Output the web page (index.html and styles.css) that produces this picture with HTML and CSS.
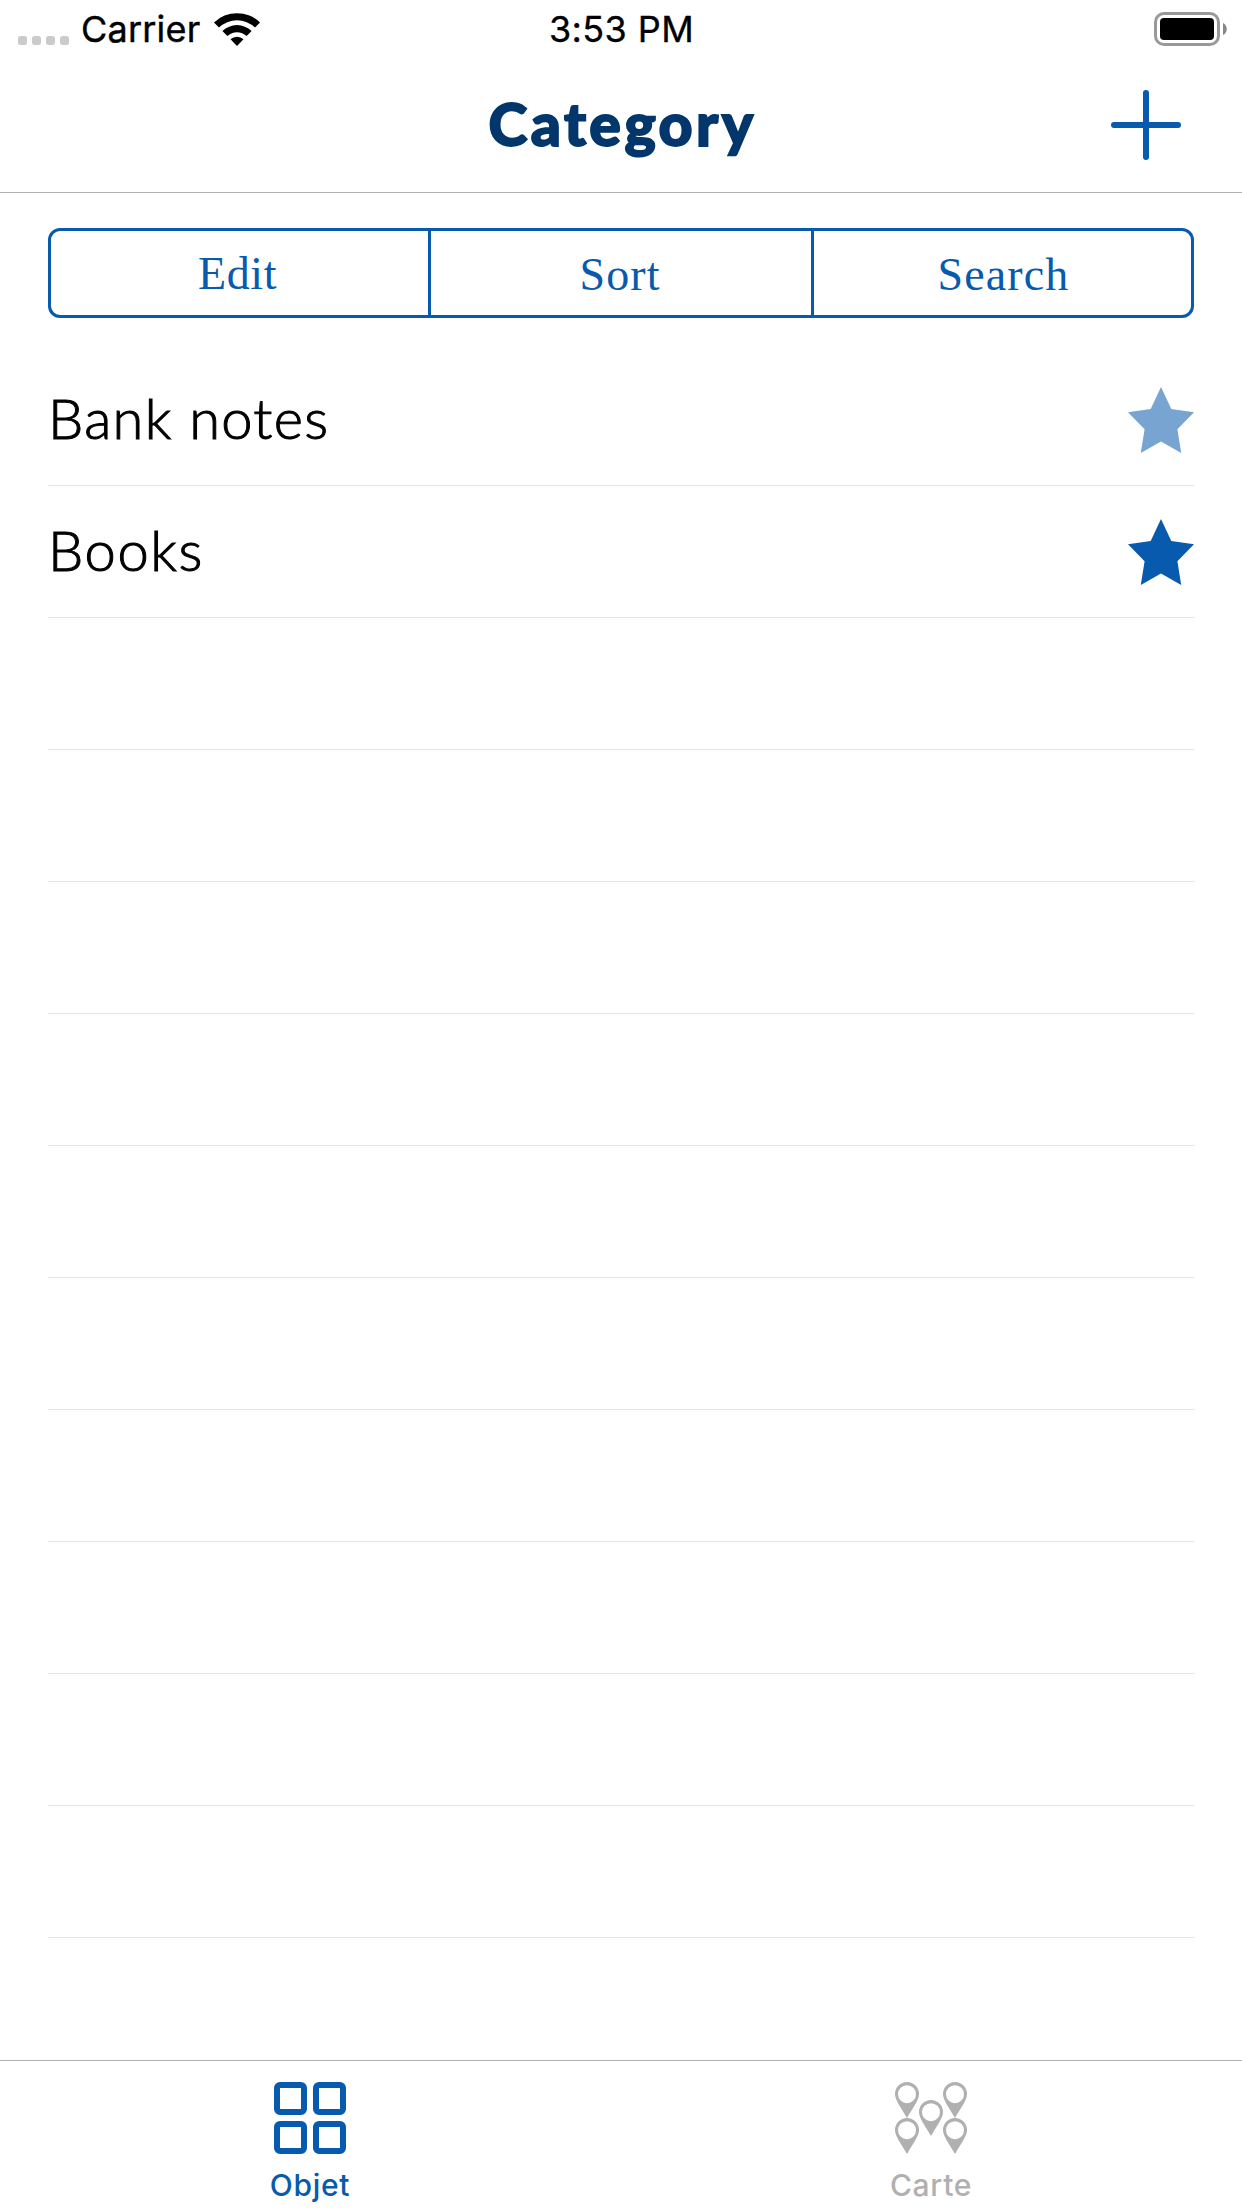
FILE: index.html
```html
<!DOCTYPE html>
<html lang="en">
<head>
<meta charset="utf-8">
<title>Category</title>
<link rel="stylesheet" href="styles.css">
</head>
<body>
<div class="app">
  <header class="top">
    <div class="status">
      <div class="status-left">
        <span class="signal"><i></i><i></i><i></i><i></i></span>
        <span class="carrier">Carrier</span>
        <svg class="wifi" width="46" height="34" viewBox="0 0 46 34">
          <path d="M0 9.5A33 33 0 0 1 46 9.5L41 14.5A26 26 0 0 0 5 14.5Z"/>
          <path d="M8.4 18A21 21 0 0 1 37.6 18L32.6 23A14 14 0 0 0 13.4 23Z"/>
          <path d="M16.5 26.2A9.5 9.5 0 0 1 29.5 26.2L23 33Z"/>
        </svg>
      </div>
      <span class="time">3:53 PM</span>
      <svg class="battery" width="74" height="34" viewBox="0 0 74 34">
        <rect x="1.5" y="1.5" width="63" height="31" rx="8.5" fill="none" stroke="#999" stroke-width="3"/>
        <rect x="6" y="6" width="54" height="22" rx="4"/>
        <path d="M69 11C74 13 74 21 69 23Z" fill="#888"/>
      </svg>
    </div>
    <div class="nav">
      <h1 class="title">Category</h1>
      <svg class="add" width="70" height="70" viewBox="0 0 70 70">
        <path d="M35 3V67M3 35H67"/>
      </svg>
    </div>
  </header>

  <main class="content">
    <div class="segments">
      <button class="segment edit">Edit</button>
      <button class="segment sort">Sort</button>
      <button class="segment search">Search</button>
    </div>
    <ul class="list">
      <li class="row"><span class="name bank">Bank notes</span>
        <svg class="star faded" width="66" height="66" viewBox="0 0 66 66"><path d="M33 0L43.3 22L66 25.2L49.4 42.3L53.2 66L33 54.6L12.8 66L16.6 42.3L0 25.2L22.7 22Z"/></svg>
      </li>
      <li class="row"><span class="name books">Books</span>
        <svg class="star" width="66" height="66" viewBox="0 0 66 66"><path d="M33 0L43.3 22L66 25.2L49.4 42.3L53.2 66L33 54.6L12.8 66L16.6 42.3L0 25.2L22.7 22Z"/></svg>
      </li>
      <li class="row"></li><li class="row"></li><li class="row"></li><li class="row"></li><li class="row"></li>
      <li class="row"></li><li class="row"></li><li class="row"></li><li class="row"></li><li class="row"></li>
    </ul>
  </main>

  <nav class="tabs">
    <div class="tab active">
      <svg width="72" height="72" viewBox="0 0 72 72">
        <path fill-rule="evenodd" d="M6 0H27A6 6 0 0 1 33 6V27A6 6 0 0 1 27 33H6A6 6 0 0 1 0 27V6A6 6 0 0 1 6 0ZM6 6V27H27V6Z"/>
        <path fill-rule="evenodd" d="M45 0H66A6 6 0 0 1 72 6V27A6 6 0 0 1 66 33H45A6 6 0 0 1 39 27V6A6 6 0 0 1 45 0ZM45 6V27H66V6Z"/>
        <path fill-rule="evenodd" d="M6 39H27A6 6 0 0 1 33 45V66A6 6 0 0 1 27 72H6A6 6 0 0 1 0 66V45A6 6 0 0 1 6 39ZM6 45V66H27V45Z"/>
        <path fill-rule="evenodd" d="M45 39H66A6 6 0 0 1 72 45V66A6 6 0 0 1 66 72H45A6 6 0 0 1 39 66V45A6 6 0 0 1 45 39ZM45 45V66H66V45Z"/>
      </svg>
      <span class="label">Objet</span>
    </div>
    <div class="tab">
      <svg width="72" height="72" viewBox="0 0 72 72">
        <defs>
          <path id="pin" fill-rule="evenodd" d="M12 0A12 12 0 0 1 24 12C24 18 19 24 12 36C5 24 0 18 0 12A12 12 0 0 1 12 0ZM12 3.2A9 9 0 1 0 12 21.2A9 9 0 1 0 12 3.2Z"/>
        </defs>
        <use href="#pin"/><use href="#pin" x="48"/><use href="#pin" x="24" y="18"/><use href="#pin" y="36"/><use href="#pin" x="48" y="36"/>
      </svg>
      <span class="label">Carte</span>
    </div>
  </nav>
</div>
</body>
</html>
```
FILE: styles.css
```css
* { box-sizing: border-box; }

body {
  margin: 0;
  background: #fff;
  color: #000;
  font-family: Inter, "Liberation Sans", sans-serif;
}

.app {
  display: flex;
  flex-direction: column;
  width: 1242px;
  height: 2208px;
}

.top {
  height: 193px;
  border-bottom: 1px solid #b2b2b2;
}

.status {
  display: grid;
  grid-template-columns: 1fr auto 1fr;
  height: 60px;
  padding: 0 17px 0 18px;
  font-size: 36px;
  line-height: 59px;
}

.status-left { display: flex; }

.signal {
  display: flex;
  gap: 5px;
  width: 63px;
  padding-top: 36px;
}

.signal i {
  width: 9px;
  height: 9px;
  border-radius: 2.5px;
  background: #cbcbcb;
}

.carrier { width: 133px; letter-spacing: 0.2px; -webkit-text-stroke: 0.4px; }
.wifi { margin-top: 13px; }
.time { letter-spacing: 0.4px; -webkit-text-stroke: 0.3px; }
.battery { justify-self: end; margin: 12px -3px 0 0; }

.nav {
  display: grid;
  grid-template-columns: 1fr auto 1fr;
  height: 132px;
  padding-right: 61px;
  padding-left: 64px;
}

.title {
  grid-column: 2;
  margin: 0;
  color: #03366b;
  font-family: Lato, sans-serif;
  font-size: 59px;
  font-weight: 900;
  letter-spacing: 3.4px;
  line-height: 127px;
  -webkit-text-stroke: 1.8px #03366b;
}

.add {
  justify-self: end;
  margin-top: 30px;
  fill: none;
  stroke: #075aad;
  stroke-width: 6;
  stroke-linecap: round;
}

.content { flex: 1; padding: 35px 48px 0; }

.segments {
  display: grid;
  grid-template-columns: 380px 383px 1fr;
  height: 90px;
  border: 3px solid #075aad;
  border-radius: 12px;
}

.segment {
  padding: 3px 0 0 2px;
  border: 0;
  border-right: 3px solid #075aad;
  background: none;
  color: #075aad;
  font-family: "Liberation Serif", serif;
  font-size: 46px;
  letter-spacing: 1.1px;
  line-height: 81px;
}

.segment:last-child { border-right: 0; }
.edit { padding: 1px 4px 0 0; letter-spacing: 0.6px; }
.sort { padding: 3px 2px 0 0; }

.list { margin: 36px 0 0; padding: 0; list-style: none; }

.row {
  display: flex;
  justify-content: space-between;
  height: 132px;
  border-bottom: 1px solid #dae6f1;
}

.name {
  font-family: Lato, sans-serif;
  font-size: 56px;
  font-weight: 300;
  line-height: 128px;
  -webkit-text-stroke: 1px;
}

.bank { letter-spacing: 1.3px; }
.books { letter-spacing: 1.6px; }

.star { margin-top: 33px; fill: #075aad; }
.faded { fill: #78a4d1; }

.tabs {
  display: grid;
  grid-template-columns: 1fr 1fr;
  height: 148px;
  border-top: 1px solid #b2b2b2;
}

.tab {
  display: flex;
  flex-direction: column;
  align-items: center;
  padding: 21px 1px 0 0;
  color: #b0b0b0;
  fill: #b0b0b0;
}

.active { color: #075aad; fill: #075aad; }

.label {
  margin-top: 13px;
  font-size: 30px;
  font-weight: 500;
  letter-spacing: 0.7px;
  line-height: 36px;
}
```
